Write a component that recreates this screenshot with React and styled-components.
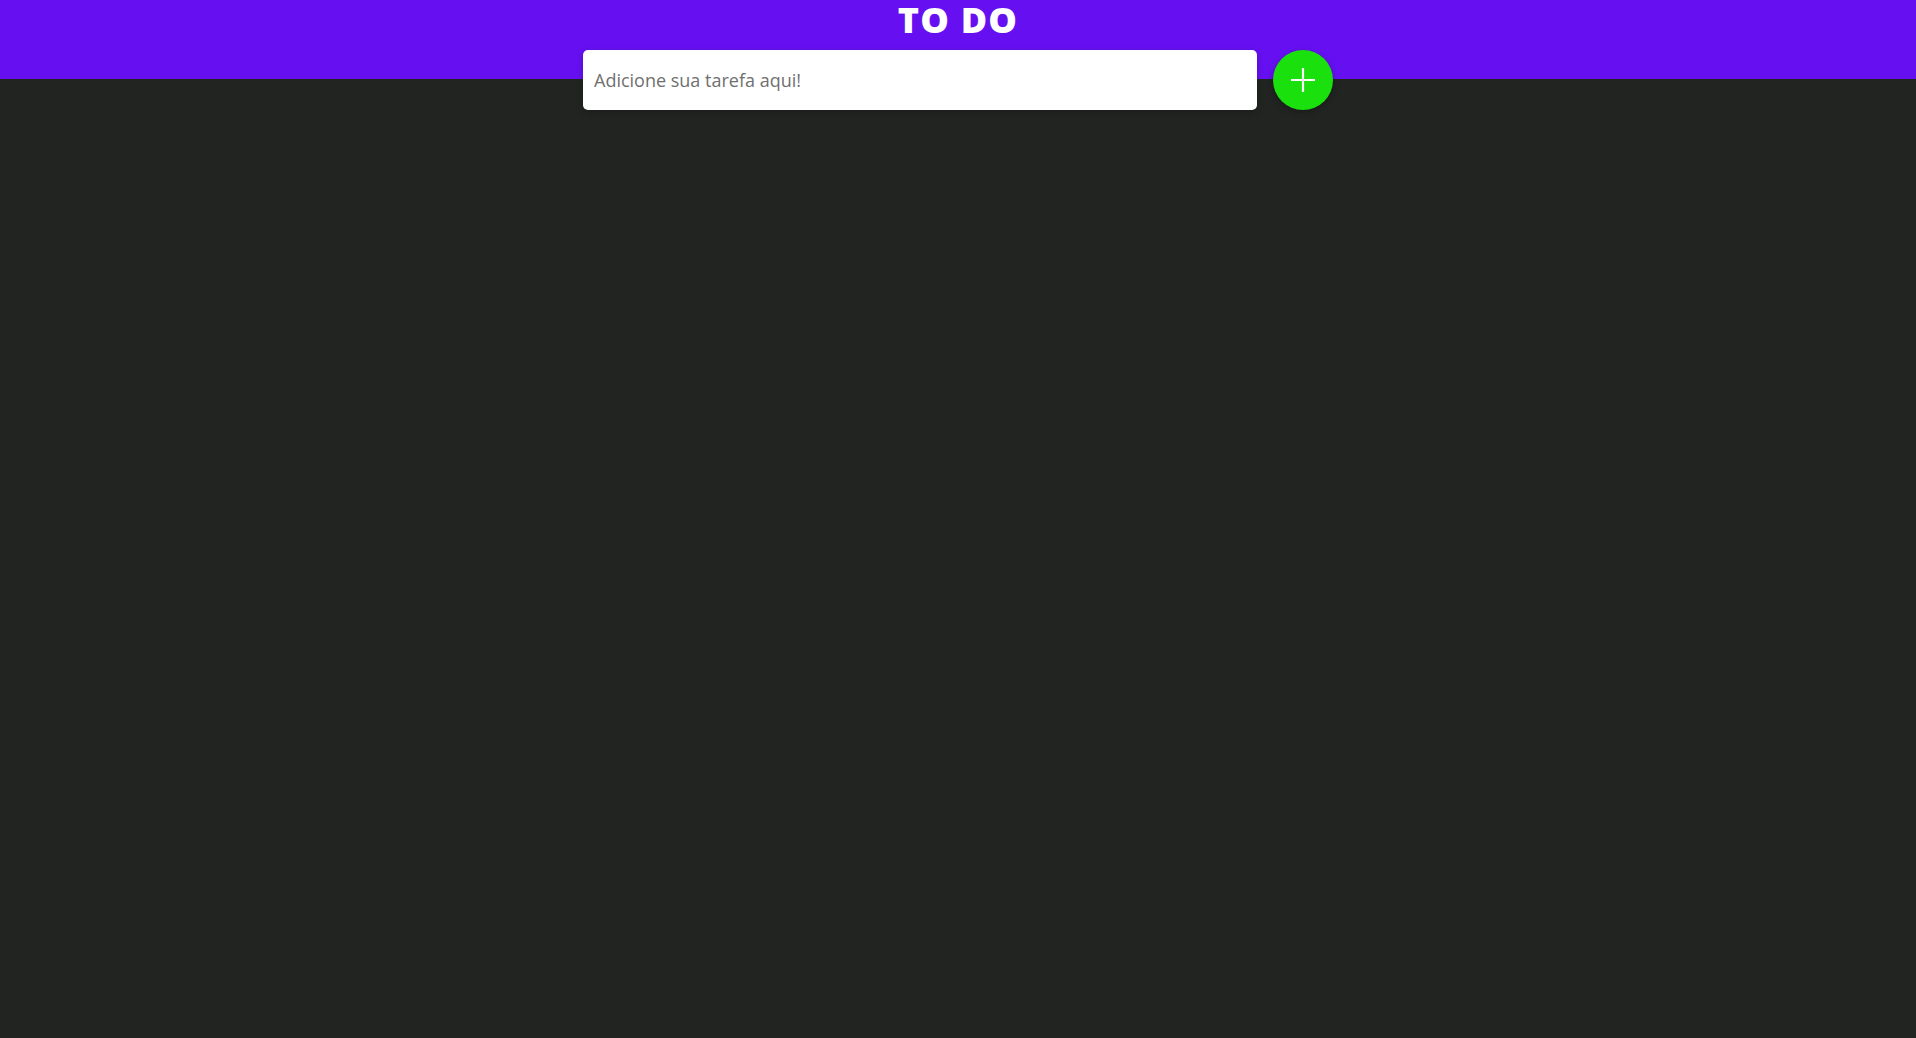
import React, { useState } from "react";
import styled, { createGlobalStyle } from "styled-components";

const GlobalStyle = createGlobalStyle`
  * {
    box-sizing: border-box;
  }
  body {
    margin: 0;
    background: #222422;
    font-family: "Open Sans", "Noto Sans", sans-serif;
    min-height: 100vh;
  }
`;

const Header = styled.header`
  height: 79px;
  background: #6610f2;
  display: flex;
  flex-direction: column;
  align-items: center;

  & > * {
    flex: none;
  }
`;

const Title = styled.h1`
  margin: 0 0 11px;
  line-height: 39px;
  color: #ffffff;
  font-family: "Open Sans", sans-serif;
  font-size: 36px;
  font-weight: 800;
  letter-spacing: 1.2px;
`;

const Form = styled.form`
  display: flex;
  align-items: center;
  gap: 16px;
`;

const Input = styled.input`
  width: 674px;
  height: 60px;
  border: none;
  border-radius: 5px;
  padding: 0 11px;
  font-family: "Open Sans", sans-serif;
  font-size: 18px;
  color: #333;
  background: #fff;
  box-shadow: 0 2px 6px rgba(0, 0, 0, 0.25);
  outline: none;

  &::placeholder {
    color: #6f6f6f;
  }
`;

const AddButton = styled.button`
  width: 60px;
  height: 60px;
  border: none;
  border-radius: 50%;
  background: #1ae00d;
  display: flex;
  align-items: center;
  justify-content: center;
  padding: 0;
  cursor: pointer;
  box-shadow: 0 2px 6px rgba(0, 0, 0, 0.3);
`;

const PlusIcon = () => (
  <svg width="26" height="26" viewBox="0 0 26 26">
    <path d="M13 1v24M1 13h24" stroke="#fff" strokeWidth="2.2" fill="none" />
  </svg>
);

export default function App() {
  const [task, setTask] = useState("");

  return (
    <>
      <GlobalStyle />
      <Header>
        <Title>TO DO</Title>
        <Form onSubmit={(e) => e.preventDefault()}>
          <Input
            value={task}
            onChange={(e) => setTask(e.target.value)}
            placeholder="Adicione sua tarefa aqui!"
          />
          <AddButton type="submit">
            <PlusIcon />
          </AddButton>
        </Form>
      </Header>
    </>
  );
}
